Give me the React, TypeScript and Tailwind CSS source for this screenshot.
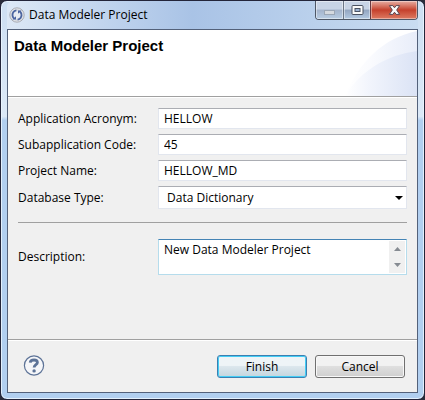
import { useId, useState } from "react";

function AppIcon() {
  return (
    <svg width="16" height="16" viewBox="0 0 16 16" aria-hidden="true">
      <circle cx="8" cy="8" r="7.2" fill="#dfe2e6" stroke="#a9acb4" strokeWidth="1" />
      <circle cx="8" cy="8" r="5" fill="#e8ecf2" stroke="#b4b8c2" strokeWidth="0.6" />
      <path d="M7.4 3.4C4.6 3.8 3.1 6.2 3.6 8.8C3.8 10 4.4 10.8 5.2 11.6" fill="none" stroke="#4a64a0" strokeWidth="1.8" />
      <path d="M8.6 12.6C11.4 12.2 12.9 9.8 12.4 7.2C12.2 6 11.6 5.2 10.8 4.4" fill="none" stroke="#4a64a0" strokeWidth="1.8" />
      <path d="M3.4 12.6H7V9.2Z" fill="#4a64a0" />
      <path d="M12.6 3.4H9V6.8Z" fill="#4a64a0" />
    </svg>
  );
}

function WindowButtons() {
  return (
    <div className="flex h-[19px] overflow-hidden rounded-b-[4px] border border-t-0 border-[#4e5766]">
      <button
        type="button"
        aria-label="Minimize"
        className="flex w-7 items-center justify-center border-r border-[#6b7686] bg-linear-to-b from-[#c8d4e6] from-45% via-[#a3b3cb] via-50% to-[#b9cde3] shadow-[inset_0_0_0_1px_rgba(255,255,255,0.45)]"
      >
        <svg width="13" height="12" viewBox="0 0 13 12" aria-hidden="true">
          <rect x="1.5" y="6.5" width="10" height="4" fill="#d5d9df" stroke="#9ba6b5" />
        </svg>
      </button>
      <button
        type="button"
        aria-label="Maximize"
        className="flex w-[27px] items-center justify-center border-r border-[#6b3a40] bg-linear-to-b from-[#c8d4e6] from-45% via-[#93a5c0] via-50% to-[#b4cae3] shadow-[inset_0_0_0_1px_rgba(255,255,255,0.45)]"
      >
        <svg width="13" height="11" viewBox="0 0 13 11" aria-hidden="true">
          <rect x="1" y="0.5" width="11" height="9" rx="1" fill="#fafafa" stroke="#4b5262" />
          <rect x="4" y="3.5" width="5" height="3" fill="#9db3d3" stroke="#4b5262" />
        </svg>
      </button>
      <button
        type="button"
        aria-label="Close"
        className="flex w-[46px] items-center justify-center bg-linear-to-b from-[#e3a398] from-5% via-[#c5402c] via-50% to-[#dd7a62] shadow-[inset_0_0_0_1px_rgba(255,255,255,0.4)]"
      >
        <svg width="13" height="11" viewBox="0 0 13 11" aria-hidden="true">
          <path
            d="M1.4 0.6H4.9L6.5 2.8L8.1 0.6H11.6L8.7 5L11.6 9.4H8.1L6.5 7.2L4.9 9.4H1.4L4.3 5Z"
            fill="#fbfbfb"
            stroke="#5b4650"
            strokeWidth="1"
          />
        </svg>
      </button>
    </div>
  );
}

function BannerArt() {
  return (
    <svg
      className="absolute top-0 right-0 h-full w-20"
      viewBox="0 0 80 66"
      preserveAspectRatio="none"
      aria-hidden="true"
    >
      <defs>
        <linearGradient id="outerSweep" x1="0" x2="1">
          <stop offset="0" stopColor="#ffffff" />
          <stop offset="0.35" stopColor="#fafbfe" />
          <stop offset="1" stopColor="#e8edf9" />
        </linearGradient>
        <linearGradient id="innerSweep" x1="0" x2="1">
          <stop offset="0" stopColor="#ffffff" />
          <stop offset="0.35" stopColor="#f1f4fc" />
          <stop offset="1" stopColor="#dbe3f5" />
        </linearGradient>
      </defs>
      <path d="M8 66C22 32 46 8 80 1V66Z" fill="url(#outerSweep)" />
      <path d="M8 66C24 40 50 25 80 21V66Z" fill="url(#innerSweep)" />
    </svg>
  );
}

function TextRow({ label, initial }: { label: string; initial: string }) {
  const id = useId();
  const [value, setValue] = useState(initial);
  return (
    <>
      <label htmlFor={id}>{label}</label>
      <input
        id={id}
        type="text"
        value={value}
        onChange={(e) => setValue(e.target.value)}
        className="h-[21px] w-full min-w-0 border border-[#e2e6ee] border-t-[#abadb3] bg-white px-[5px] outline-none"
      />
    </>
  );
}

export default function App() {
  const [description, setDescription] = useState("New Data Modeler Project");
  return (
    <div className="min-h-screen bg-[#2a2c3a] font-['Open_Sans','Noto_Sans',sans-serif] text-xs text-black">
      <div className="flex min-h-screen flex-col rounded-[7px] border border-[#23253a] bg-linear-to-b from-[#cfe0f3] from-5% via-[#dce9f7] via-29% to-[#b1cff0] to-30% px-1.5 pb-1.5 shadow-[inset_0_0_0_1px_rgba(235,246,255,0.85)]">
        <div className="flex h-7 justify-between rounded-t-[6px] bg-linear-to-r from-[#dce8f6] via-[#a9c3e6] via-45% to-[#c9dcf1]">
          <div className="flex items-center gap-1 pl-0.5">
            <AppIcon />
            <span>Data Modeler Project</span>
          </div>
          <WindowButtons />
        </div>

        <main className="flex flex-1 flex-col border border-[#53617a] bg-[#f0f0f0]">
          <header className="relative h-[67px] border-b border-[#a0a0a0] bg-white px-1.5 pt-1.5">
            <BannerArt />
            <h1 className="relative font-['Liberation_Sans',sans-serif] text-[15px] leading-5 font-bold">
              Data Modeler Project
            </h1>
          </header>

          <form className="flex flex-1 flex-col border-t border-white" onSubmit={(e) => e.preventDefault()}>
            <div className="flex-1 px-2.5 pt-2.5">
              <div className="grid grid-cols-[140px_1fr] items-center gap-y-[5px]">
                <TextRow label="Application Acronym:" initial="HELLOW" />
                <TextRow label="Subapplication Code:" initial="45" />
                <TextRow label="Project Name:" initial="HELLOW_MD" />
                <label htmlFor="dbType">Database Type:</label>
                <div className="relative">
                  <select
                    id="dbType"
                    className="block h-[23px] w-full appearance-none border border-[#e2e6ee] border-t-[#abadb3] bg-white pr-5 pl-2 outline-none"
                  >
                    <option>Data Dictionary</option>
                  </select>
                  <svg
                    className="pointer-events-none absolute top-[10px] right-1"
                    width="8"
                    height="4"
                    viewBox="0 0 8 4"
                    aria-hidden="true"
                  >
                    <path d="M0 0H8L4 4Z" fill="#000" />
                  </svg>
                </div>
              </div>

              <hr className="mt-[13px] mb-4 border-t border-[#a0a0a0]" />

              <div className="grid grid-cols-[140px_1fr] items-center">
                <label htmlFor="description">Description:</label>
                <div className="relative">
                  <textarea
                    id="description"
                    value={description}
                    onChange={(e) => setDescription(e.target.value)}
                    className="block h-9 w-full resize-none overflow-hidden border border-[#b5dcec] border-t-[#4584b5] bg-white py-0.5 pr-5 pl-[5px] leading-4 outline-none"
                  />
                  <div
                    aria-hidden="true"
                    className="absolute top-0.5 right-0.5 bottom-0.5 flex w-4 flex-col items-center justify-around bg-[#f0f0f0]"
                  >
                    <svg width="7" height="4" viewBox="0 0 7 4">
                      <path d="M0 4H7L3.5 0Z" fill="#868b92" />
                    </svg>
                    <svg width="7" height="4" viewBox="0 0 7 4">
                      <path d="M0 0H7L3.5 4Z" fill="#868b92" />
                    </svg>
                  </div>
                </div>
              </div>
            </div>

            <footer className="border-t border-[#a0a0a0]">
              <div className="flex h-[52px] items-start justify-between border-t border-white pt-3.5 pr-3 pl-[15px]">
                <button type="button" aria-label="Help">
                  <svg width="22" height="22" viewBox="0 0 22 22" aria-hidden="true">
                    <circle cx="11" cy="10.5" r="9.6" fill="#f5f6f9" stroke="#5d7397" strokeWidth="1.2" />
                    <path
                      d="M7.2 7.7C7.4 5.7 9 5 11 5C13.2 5 14.4 6 14.4 7.5C14.4 9.8 11.1 9.7 11.1 12.6"
                      fill="none"
                      stroke="#5d7397"
                      strokeWidth="2.8"
                    />
                    <circle cx="11.1" cy="15.9" r="1.7" fill="#5d7397" />
                  </svg>
                </button>
                <div className="flex gap-2">
                  <button
                    type="submit"
                    className="h-[23px] w-[90px] rounded-[3px] border border-[#3c7fb1] bg-linear-to-b from-[#eef4f7] from-45% via-[#dce7ed] via-50% to-[#c3d5de] shadow-[inset_0_0_0_1px_#43cdf5]"
                  >
                    Finish
                  </button>
                  <button
                    type="button"
                    className="h-[23px] w-[90px] rounded-[3px] border border-[#707070] bg-linear-to-b from-[#f2f2f2] from-45% via-[#dfdfdf] via-50% to-[#cfcfcf] shadow-[inset_0_0_0_1px_#f8f8f8]"
                  >
                    Cancel
                  </button>
                </div>
              </div>
            </footer>
          </form>
        </main>
      </div>
    </div>
  );
}
